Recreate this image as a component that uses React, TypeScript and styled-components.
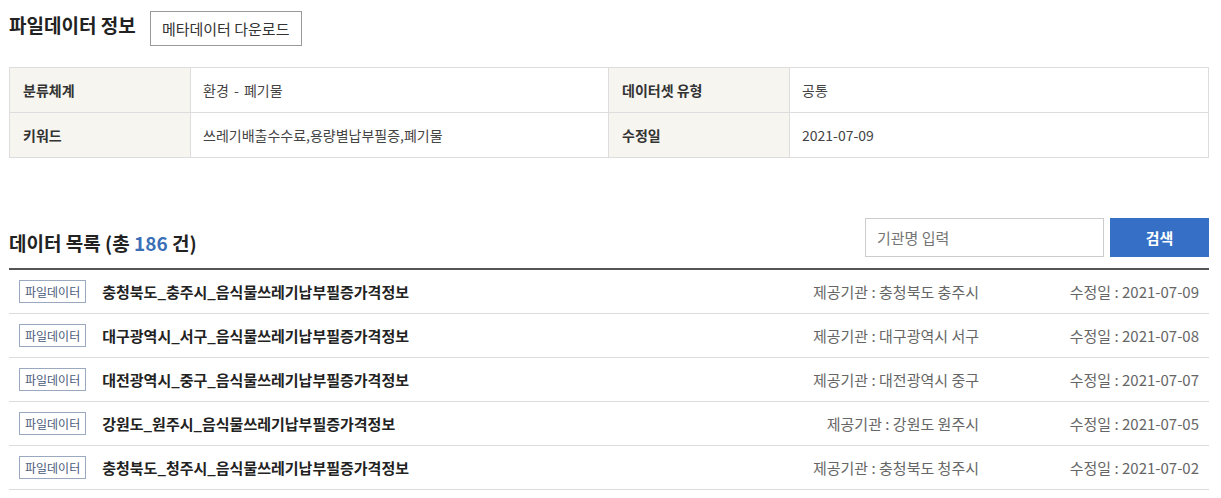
import React from 'react';
import styled, { createGlobalStyle } from 'styled-components';

const GlobalStyle = createGlobalStyle`
  body {
    margin: 0;
    background: #fff;
    font-family: 'Noto Sans CJK KR', 'Noto Sans', sans-serif;
    color: #333;
  }
`;

interface Row {
  title: string;
  org: string;
  date: string;
}

const rows: Row[] = [
  { title: '충청북도_충주시_음식물쓰레기납부필증가격정보', org: '충청북도 충주시', date: '2021-07-09' },
  { title: '대구광역시_서구_음식물쓰레기납부필증가격정보', org: '대구광역시 서구', date: '2021-07-08' },
  { title: '대전광역시_중구_음식물쓰레기납부필증가격정보', org: '대전광역시 중구', date: '2021-07-07' },
  { title: '강원도_원주시_음식물쓰레기납부필증가격정보', org: '강원도 원주시', date: '2021-07-05' },
  { title: '충청북도_청주시_음식물쓰레기납부필증가격정보', org: '충청북도 청주시', date: '2021-07-02' },
];

const App: React.FC = () => {
  return (
    <Page>
      <GlobalStyle />
      <InfoHeader>
        <SectionTitle>파일데이터 정보</SectionTitle>
        <OutlineBtn>메타데이터 다운로드</OutlineBtn>
      </InfoHeader>
      <InfoTable>
        <colgroup>
          <col style={{ width: 181 }} />
          <col style={{ width: 418 }} />
          <col style={{ width: 181 }} />
          <col />
        </colgroup>
        <tbody>
          <tr>
            <Th>분류체계</Th>
            <Td>환경 - 폐기물</Td>
            <Th>데이터셋 유형</Th>
            <Td>공통</Td>
          </tr>
          <tr>
            <Th>키워드</Th>
            <Td>쓰레기배출수수료,용량별납부필증,폐기물</Td>
            <Th>수정일</Th>
            <Td>2021-07-09</Td>
          </tr>
        </tbody>
      </InfoTable>

      <ListHeader>
        <SectionTitle $lift>
          데이터 목록 (총 <Count>186</Count> 건)
        </SectionTitle>
        <SearchBox>
          <SearchInput placeholder="기관명 입력" />
          <SearchBtn>검색</SearchBtn>
        </SearchBox>
      </ListHeader>
      <List>
        {rows.map((r) => (
          <ListRow key={r.title}>
            <Tag>파일데이터</Tag>
            <RowTitle>{r.title}</RowTitle>
            <Org>제공기관 : {r.org}</Org>
            <Updated>수정일 : {r.date}</Updated>
          </ListRow>
        ))}
      </List>
    </Page>
  );
};

const Page = styled.div`
  width: 1200px;
  padding: 11px 0 0 9px;
`;

const InfoHeader = styled.div`
  display: flex;
  align-items: flex-start;
  gap: 14px;
  margin-bottom: 21px;
`;

const SectionTitle = styled.h2<{ $lift?: boolean }>`
  margin: 0;
  padding-top: ${({ $lift }) => ($lift ? '0' : '2px')};
  margin-bottom: ${({ $lift }) => ($lift ? '2px' : '0')};
  font-size: 19px;
  font-weight: 700;
  color: #222;
  line-height: 24px;
`;

const Count = styled.span`
  color: #3a6fb8;
`;

const OutlineBtn = styled.button`
  height: 35px;
  width: 152px;
  padding: 0;
  border: 1px solid #999;
  background: #fff;
  font-family: inherit;
  font-size: 15px;
  color: #333;
`;

const InfoTable = styled.table`
  width: 1200px;
  border-collapse: collapse;
  table-layout: fixed;
  font-size: 14px;
`;

const Th = styled.th`
  height: 44px;
  padding: 0 13px;
  border: 1px solid #ddd;
  background: #f6f5f0;
  text-align: left;
  font-weight: 700;
  color: #333;
`;

const Td = styled.td`
  height: 44px;
  padding: 0 12px;
  border: 1px solid #ddd;
  color: #444;
  word-spacing: 2px;
`;

const ListHeader = styled.div`
  display: flex;
  align-items: flex-end;
  justify-content: space-between;
  margin-top: 60px;
  padding-bottom: 11px;
  border-bottom: 2px solid #555;
`;

const SearchBox = styled.div`
  display: flex;
  gap: 6px;
`;

const SearchInput = styled.input`
  box-sizing: border-box;
  width: 239px;
  height: 39px;
  padding: 0 11px;
  border: 1px solid #ccc;
  font-family: inherit;
  font-size: 15px;
  color: #333;
  outline: none;

  ::placeholder {
    color: #888;
  }
`;

const SearchBtn = styled.button`
  width: 99px;
  height: 39px;
  border: none;
  background: #3570c6;
  color: #fff;
  font-family: inherit;
  font-size: 15px;
  font-weight: 700;
`;

const List = styled.div`
  display: flex;
  flex-direction: column;
`;

const ListRow = styled.div`
  display: flex;
  align-items: center;
  height: 43px;
  border-bottom: 1px solid #ddd;
  padding-left: 10px;
`;

const Tag = styled.span`
  box-sizing: border-box;
  height: 23px;
  padding: 0 5px;
  border: 1px solid #9aa8c0;
  color: #4a5a7a;
  font-size: 12px;
  line-height: 21px;
`;

const RowTitle = styled.span`
  flex: 1;
  margin-left: 16px;
  font-size: 15px;
  font-weight: 700;
  color: #222;
`;

const Org = styled.span`
  font-size: 15px;
  color: #666;
`;

const Updated = styled.span`
  width: 230px;
  padding-right: 10px;
  box-sizing: border-box;
  text-align: right;
  font-size: 15px;
  color: #666;
`;

export default App;
